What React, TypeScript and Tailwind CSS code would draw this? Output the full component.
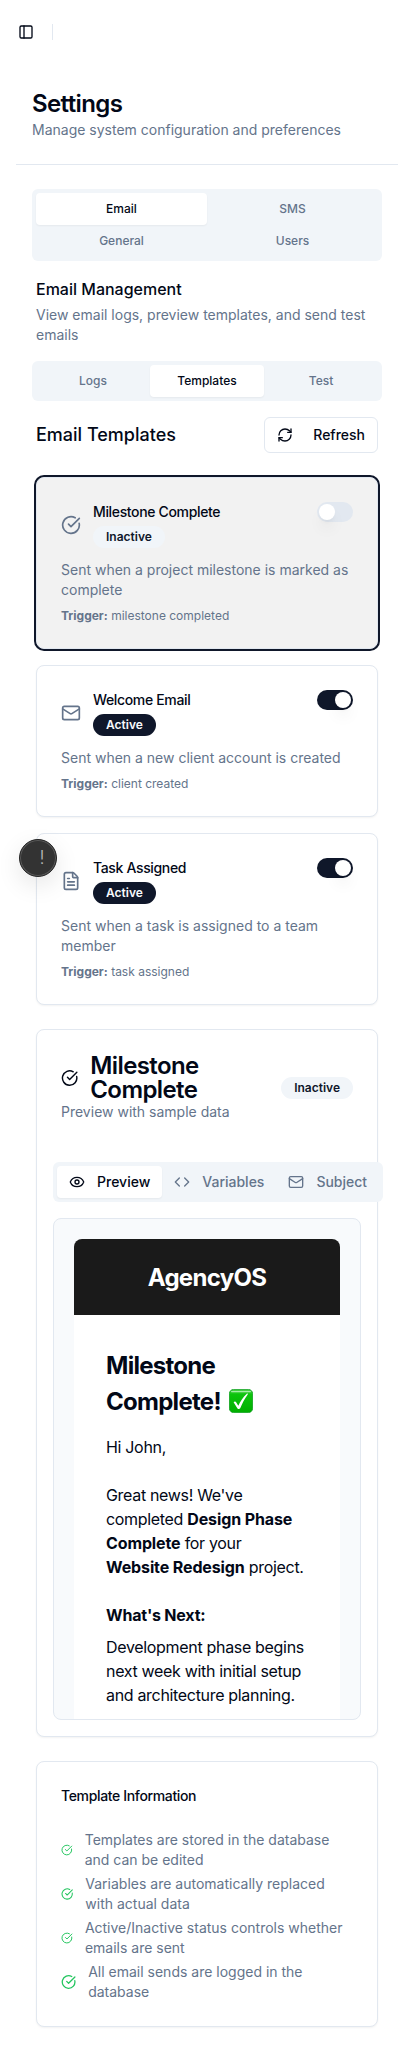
import React, { useState } from "react";
import {
  CircleCheckBig,
  Code,
  Eye,
  FileText,
  Mail,
  PanelLeft,
  RefreshCw,
  type LucideIcon,
} from "lucide-react";

type Template = {
  id: string;
  name: string;
  icon: LucideIcon;
  active: boolean;
  description: string;
  trigger: string;
};

const TEMPLATES: Template[] = [
  {
    id: "milestone",
    name: "Milestone Complete",
    icon: CircleCheckBig,
    active: false,
    description: "Sent when a project milestone is marked as complete",
    trigger: "milestone completed",
  },
  {
    id: "welcome",
    name: "Welcome Email",
    icon: Mail,
    active: true,
    description: "Sent when a new client account is created",
    trigger: "client created",
  },
  {
    id: "task",
    name: "Task Assigned",
    icon: FileText,
    active: true,
    description: "Sent when a task is assigned to a team member",
    trigger: "task assigned",
  },
];

const NOTES = [
  "Templates are stored in the database and can be edited",
  "Variables are automatically replaced with actual data",
  "Active/Inactive status controls whether emails are sent",
  "All email sends are logged in the database",
];

function Badge({ active }: { active: boolean }) {
  return (
    <span
      className={`inline-flex items-center rounded-full border border-transparent px-3 py-0.5 text-xs font-semibold ${
        active ? "bg-[#0f172a] text-[#f8fafc]" : "bg-[#f1f5f9] text-[#0f172a]"
      }`}
    >
      {active ? "Active" : "Inactive"}
    </span>
  );
}

function Toggle({ on, onClick }: { on: boolean; onClick: () => void }) {
  return (
    <button
      role="switch"
      aria-checked={on}
      onClick={onClick}
      className={`flex h-5 w-9 shrink-0 items-center rounded-full border-2 border-transparent ${
        on ? "justify-end bg-[#0f172a]" : "justify-start bg-[#e2e8f0]"
      }`}
    >
      <span className="size-4 rounded-full bg-white shadow-lg" />
    </button>
  );
}

function TabButton({ label, selected }: { label: string; selected: boolean }) {
  return (
    <button
      className={`flex h-8 items-center justify-center rounded text-xs font-medium ${
        selected ? "bg-white text-[#020817] shadow-xs" : "text-[#64748b]"
      }`}
    >
      {label}
    </button>
  );
}

function TemplateCard({
  template,
  selected,
  onToggle,
}: {
  template: Template;
  selected: boolean;
  onToggle: () => void;
}) {
  const Icon = template.icon;
  return (
    <div
      className={`rounded-lg border border-[#e2e8f0] p-6 ${
        selected ? "bg-[#f2f2f2] ring-2 ring-[#0f172a]" : "bg-white shadow-xs"
      }`}
    >
      <div className="flex items-start justify-between">
        <div className="flex items-center gap-3">
          <Icon className="size-5 text-[#64748b]" />
          <div className="flex flex-col items-start gap-1">
            <h3 className="text-sm font-medium tracking-tight">{template.name}</h3>
            <Badge active={template.active} />
          </div>
        </div>
        <Toggle on={template.active} onClick={onToggle} />
      </div>
      <p className="mt-3 text-sm text-[#64748b]">{template.description}</p>
      <p className="mt-2 text-xs text-[#64748b]">
        <strong className="font-bold">Trigger:</strong> {template.trigger}
      </p>
    </div>
  );
}

function CheckMark() {
  return (
    <svg viewBox="0 0 24 24" role="img" aria-label="Done" className="ml-[3px] inline-block size-6 align-[-3px]">
      <defs>
        <linearGradient id="check-fill" x1="0" y1="0" x2="0" y2="1">
          <stop offset="0" stopColor="#4fd44f" />
          <stop offset="0.22" stopColor="#0cc40c" />
          <stop offset="1" stopColor="#00ae00" />
        </linearGradient>
      </defs>
      <rect x="0.4" y="0.4" width="23.2" height="23.2" rx="4.2" fill="url(#check-fill)" stroke="#0a9e1c" strokeWidth="0.8" />
      <path d="M2.6 2.6h18.8" stroke="#a5eca5" strokeWidth="1.2" strokeLinecap="round" />
      <path
        d="M4.6 13.2c.9-.9 2-.9 2.700.2l2 3.400C11.400 12.400 14 8 17.600 4.900c.8-.6 1.500-.2 1.100.5-3 4.100-5.500 8.800-7.500 13.900-.5 1-2.100 1-2.700.1z"
        fill="#ffffff"
      />
    </svg>
  );
}

function EmailPreview() {
  return (
    <div className="mt-4 h-[502px] overflow-hidden rounded-lg border border-[#e2e8f0] bg-[#f8fafc] p-5">
      <div className="rounded-t-lg bg-[#1a1a1a] px-5 pt-[21px] pb-[19px] text-center text-2xl leading-9 font-bold tracking-[-0.7px] text-white">
        AgencyOS
      </div>
      <div className="bg-white px-8 pt-[33px] pb-8 text-base tracking-[-0.32px]">
        <h2 className="mb-[15px] text-2xl leading-9 font-bold tracking-[-0.72px]">
          Milestone Complete! <CheckMark />
        </h2>
        <p>Hi John,</p>
        <p className="mt-6">
          Great news! We've completed <strong className="tracking-[-0.12px]">Design Phase Complete</strong> for your{" "}
          <strong className="tracking-[-0.12px]">Website Redesign</strong> project.
        </p>
        <p className="mt-6 font-bold tracking-[-0.2px]">What's Next:</p>
        <p className="mt-2">Development phase begins next week with initial setup and architecture planning.</p>
      </div>
    </div>
  );
}

export default function App() {
  const [templates, setTemplates] = useState(TEMPLATES);
  const toggle = (id: string) =>
    setTemplates((list) => list.map((t) => (t.id === id ? { ...t, active: !t.active } : t)));

  return (
    <div className="relative min-h-[2067px] overflow-x-hidden bg-white font-['Inter',sans-serif] text-[#020817]">
      <header className="flex h-16 items-center gap-[18px] pl-[18px]">
        <PanelLeft className="size-4" />
        <div className="h-4 w-px bg-[#e2e8f0]" />
      </header>

      <main className="px-4 pb-10">
        <div className="border-b border-[#e2e8f0] px-4 pt-6 pb-6">
          <h1 className="text-2xl font-semibold tracking-tight">Settings</h1>
          <p className="text-sm text-[#64748b]">Manage system configuration and preferences</p>
        </div>

        <div className="px-4 pt-6">
          <div className="grid grid-cols-2 rounded-md bg-[#f1f5f9] p-1">
            <TabButton label="Email" selected />
            <TabButton label="SMS" selected={false} />
            <TabButton label="General" selected={false} />
            <TabButton label="Users" selected={false} />
          </div>

          <div className="px-1 pt-4">
            <h2 className="text-base font-medium">Email Management</h2>
            <p className="mt-1 text-sm text-[#64748b]">
              View email logs, preview templates, and send test emails
            </p>
          </div>

          <div className="mt-4 grid grid-cols-3 rounded-md bg-[#f1f5f9] p-1">
            <TabButton label="Logs" selected={false} />
            <TabButton label="Templates" selected />
            <TabButton label="Test" selected={false} />
          </div>

          <div className="px-1 pt-4">
            <div className="flex items-center justify-between">
              <h2 className="text-lg font-medium">Email Templates</h2>
              <button className="flex h-9 items-center rounded-md border border-[#e2e8f0] bg-white px-3 text-sm font-medium">
                <RefreshCw className="mr-5 size-4" />
                Refresh
              </button>
            </div>

            <div className="mt-6 flex flex-col gap-4">
              {templates.map((t, i) => (
                <TemplateCard key={t.id} template={t} selected={i === 0} onToggle={() => toggle(t.id)} />
              ))}
            </div>

            <section className="mt-6 rounded-lg border border-[#e2e8f0] bg-white shadow-xs">
              <div className="flex items-center justify-between p-6">
                <div>
                  <h3 className="flex items-center gap-3 text-2xl leading-none font-semibold tracking-tight">
                    <CircleCheckBig className="size-5" />
                    Milestone Complete
                  </h3>
                  <p className="text-sm text-[#64748b]">Preview with sample data</p>
                </div>
                <Badge active={false} />
              </div>
              <div className="p-4">
                <div className="flex h-10 w-[330px] items-center rounded-md bg-[#f1f5f9] p-1 text-sm font-medium text-[#64748b]">
                  <button className="flex h-8 items-center gap-3 rounded bg-white px-3 text-[#020817] shadow-xs">
                    <Eye className="size-4" />
                    Preview
                  </button>
                  <button className="flex h-8 items-center gap-3 rounded px-3">
                    <Code className="size-4" />
                    Variables
                  </button>
                  <button className="flex h-8 items-center gap-3 rounded px-3">
                    <Mail className="size-4" />
                    Subject
                  </button>
                </div>
                <EmailPreview />
              </div>
            </section>

            <section className="mt-6 rounded-lg border border-[#e2e8f0] bg-white p-6 shadow-xs">
              <h3 className="text-sm font-medium tracking-tight">Template Information</h3>
              <ul className="mt-6 flex flex-col gap-1 text-sm text-[#64748b]">
                {NOTES.map((note) => (
                  <li key={note} className="flex items-center gap-3">
                    <CircleCheckBig className="size-4 text-[#22c55e]" />
                    <span>{note}</span>
                  </li>
                ))}
              </ul>
            </section>
          </div>
        </div>
      </main>

      <button className="absolute top-[839px] left-[19px] flex size-[38px] items-center justify-center rounded-full border border-[#262626] bg-[#333333] pl-2 text-lg font-light text-[#bbbbbb] shadow-[inset_0_0_0_1px_#5a5a5a,0_8px_24px_rgba(0,0,0,0.1)]">
        !
      </button>
    </div>
  );
}
